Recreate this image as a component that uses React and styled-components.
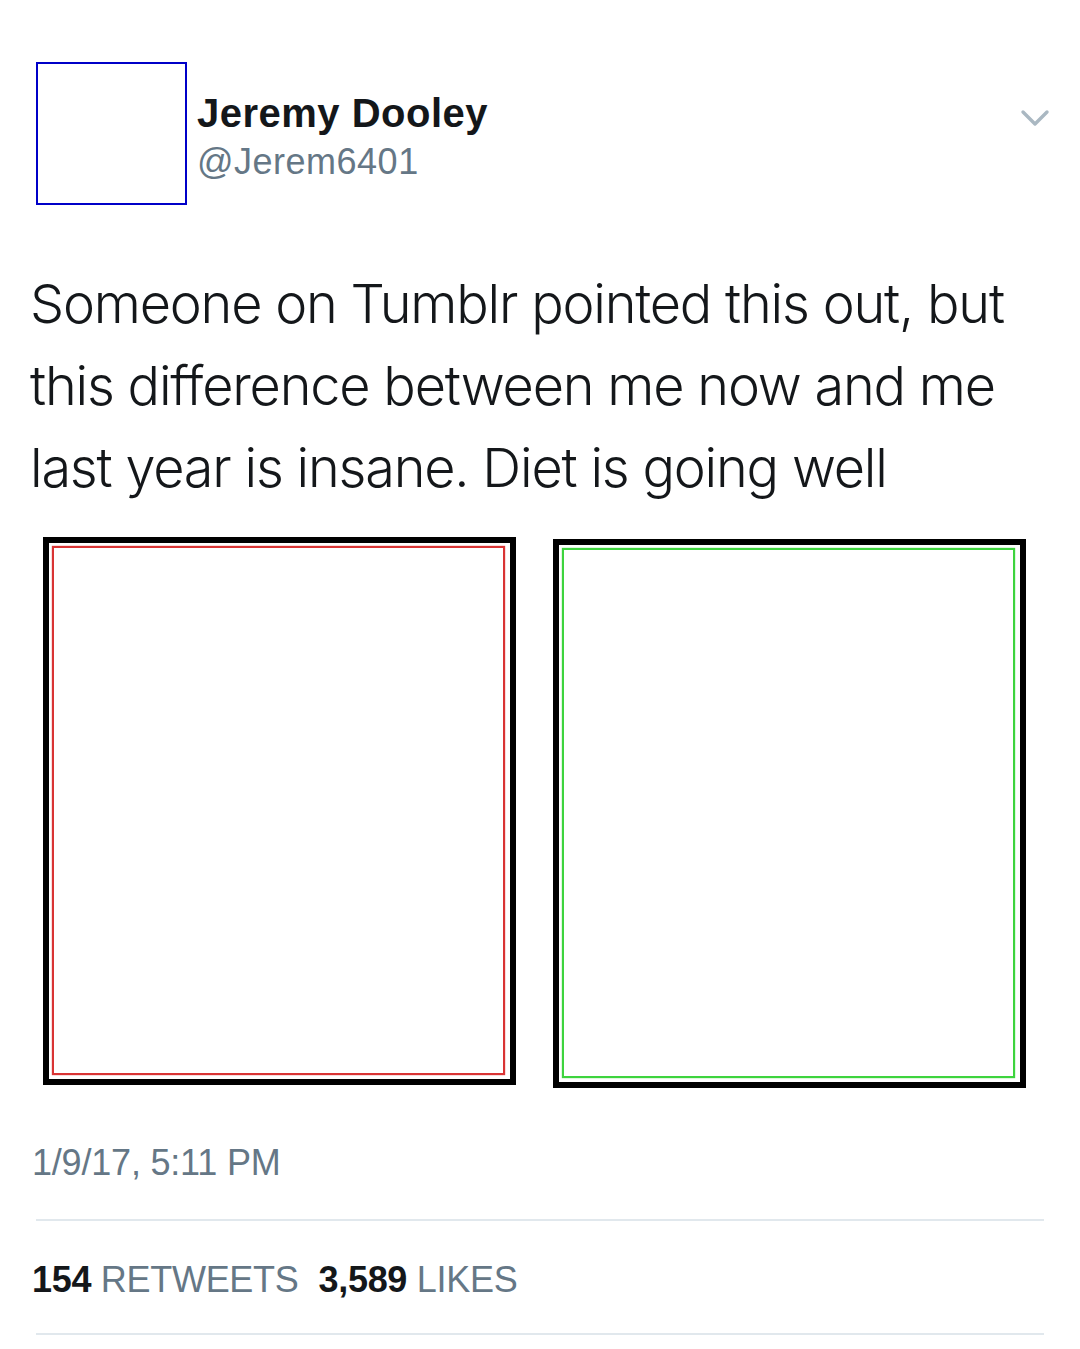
import React from "react";
import styled, { createGlobalStyle } from "styled-components";

const Global = createGlobalStyle`
  html, body { margin: 0; padding: 0; background: #fff; }
  body { font-family: "Liberation Sans", Arial, sans-serif; }
`;

const Page = styled.div`
  width: 1080px;
  height: 1349px;
  background: #fff;
  box-sizing: border-box;
  padding: 62px 36px 0 32px;
  display: flex;
  flex-direction: column;
  overflow: hidden;
`;

const Header = styled.div`
  display: flex;
  align-items: flex-start;
  padding-left: 4px;
`;

const Avatar = styled.div`
  width: 151px;
  height: 143px;
  box-sizing: border-box;
  border: 2px solid #0000c8;
  flex: none;
`;

const Names = styled.div`
  display: flex;
  flex-direction: column;
  margin-left: 10px;
  padding-top: 27px;
  flex: 1;
`;

const Name = styled.div`
  font-weight: 700;
  font-size: 40px;
  line-height: 48px;
  color: #14171a;
  letter-spacing: 0.5px;
`;

const Handle = styled.div`
  font-size: 36px;
  line-height: 44px;
  margin-top: 3px;
  color: #657786;
  letter-spacing: 0.5px;
`;

const Chevron = styled.svg`
  width: 30px;
  height: 20px;
  margin-top: 47px;
  margin-right: -6px;
  flex: none;
`;

const Body = styled.p`
  margin: 58px 0 0 -2px;
  font-family: "Inter", "Liberation Sans", sans-serif;
  font-weight: 300;
  font-size: 54px;
  line-height: 82px;
  color: #14171a;
  letter-spacing: -1.2px;
`;

const Media = styled.div`
  display: grid;
  grid-template-columns: 473px 473px;
  column-gap: 37px;
  margin: 28px 0 0 11px;
  align-items: start;
`;

const Frame = styled.div`
  height: ${(p) => p.$h}px;
  margin-top: ${(p) => p.$top || 0}px;
  box-sizing: border-box;
  border: 6px solid #000;
  padding: 3px 5px 4px 3px;
  display: flex;
`;

const Inner = styled.div`
  flex: 1;
  border: 2px solid ${(p) => p.$color};
  box-shadow: 0 0 1px ${(p) => p.$color};
`;

const Stamp = styled.div`
  margin-top: 53px;
  font-size: 36px;
  line-height: 44px;
  color: #657786;
  letter-spacing: -0.2px;
`;

const Divider = styled.div`
  height: 2px;
  background: #e1e8ed;
  margin-left: 4px;
  margin-top: ${(p) => p.$top || 0}px;
`;

const Stats = styled.div`
  display: flex;
  gap: 20px;
  font-size: 36px;
  line-height: 44px;
  letter-spacing: -0.3px;
  padding: 37px 0 31px 0;
`;

const Stat = styled.span`
  color: #657786;
  b {
    color: #14171a;
    font-weight: 700;
  }
`;

export default function App() {
  return (
    <>
      <Global />
      <Page>
        <Header>
          <Avatar />
          <Names>
            <Name>Jeremy Dooley</Name>
            <Handle>@Jerem6401</Handle>
          </Names>
          <Chevron viewBox="0 0 30 20">
            <polyline
              points="3,3 15,15 27,3"
              fill="none"
              stroke="#aab8c2"
              strokeWidth="3.4"
              strokeLinecap="round"
              strokeLinejoin="round"
            />
          </Chevron>
        </Header>
        <Body>
          Someone on Tumblr pointed this out, but this difference between me now and me last year is insane. Diet is going well
        </Body>
        <Media>
          <Frame $h={548}>
            <Inner $color="#d93434" />
          </Frame>
          <Frame $h={549} $top={2}>
            <Inner $color="#3ed43e" />
          </Frame>
        </Media>
        <Stamp>1/9/17, 5:11 PM</Stamp>
        <Divider $top={34} />
        <Stats>
          <Stat><b>154</b> RETWEETS</Stat>
          <Stat><b>3,589</b> LIKES</Stat>
        </Stats>
        <Divider />
      </Page>
    </>
  );
}
